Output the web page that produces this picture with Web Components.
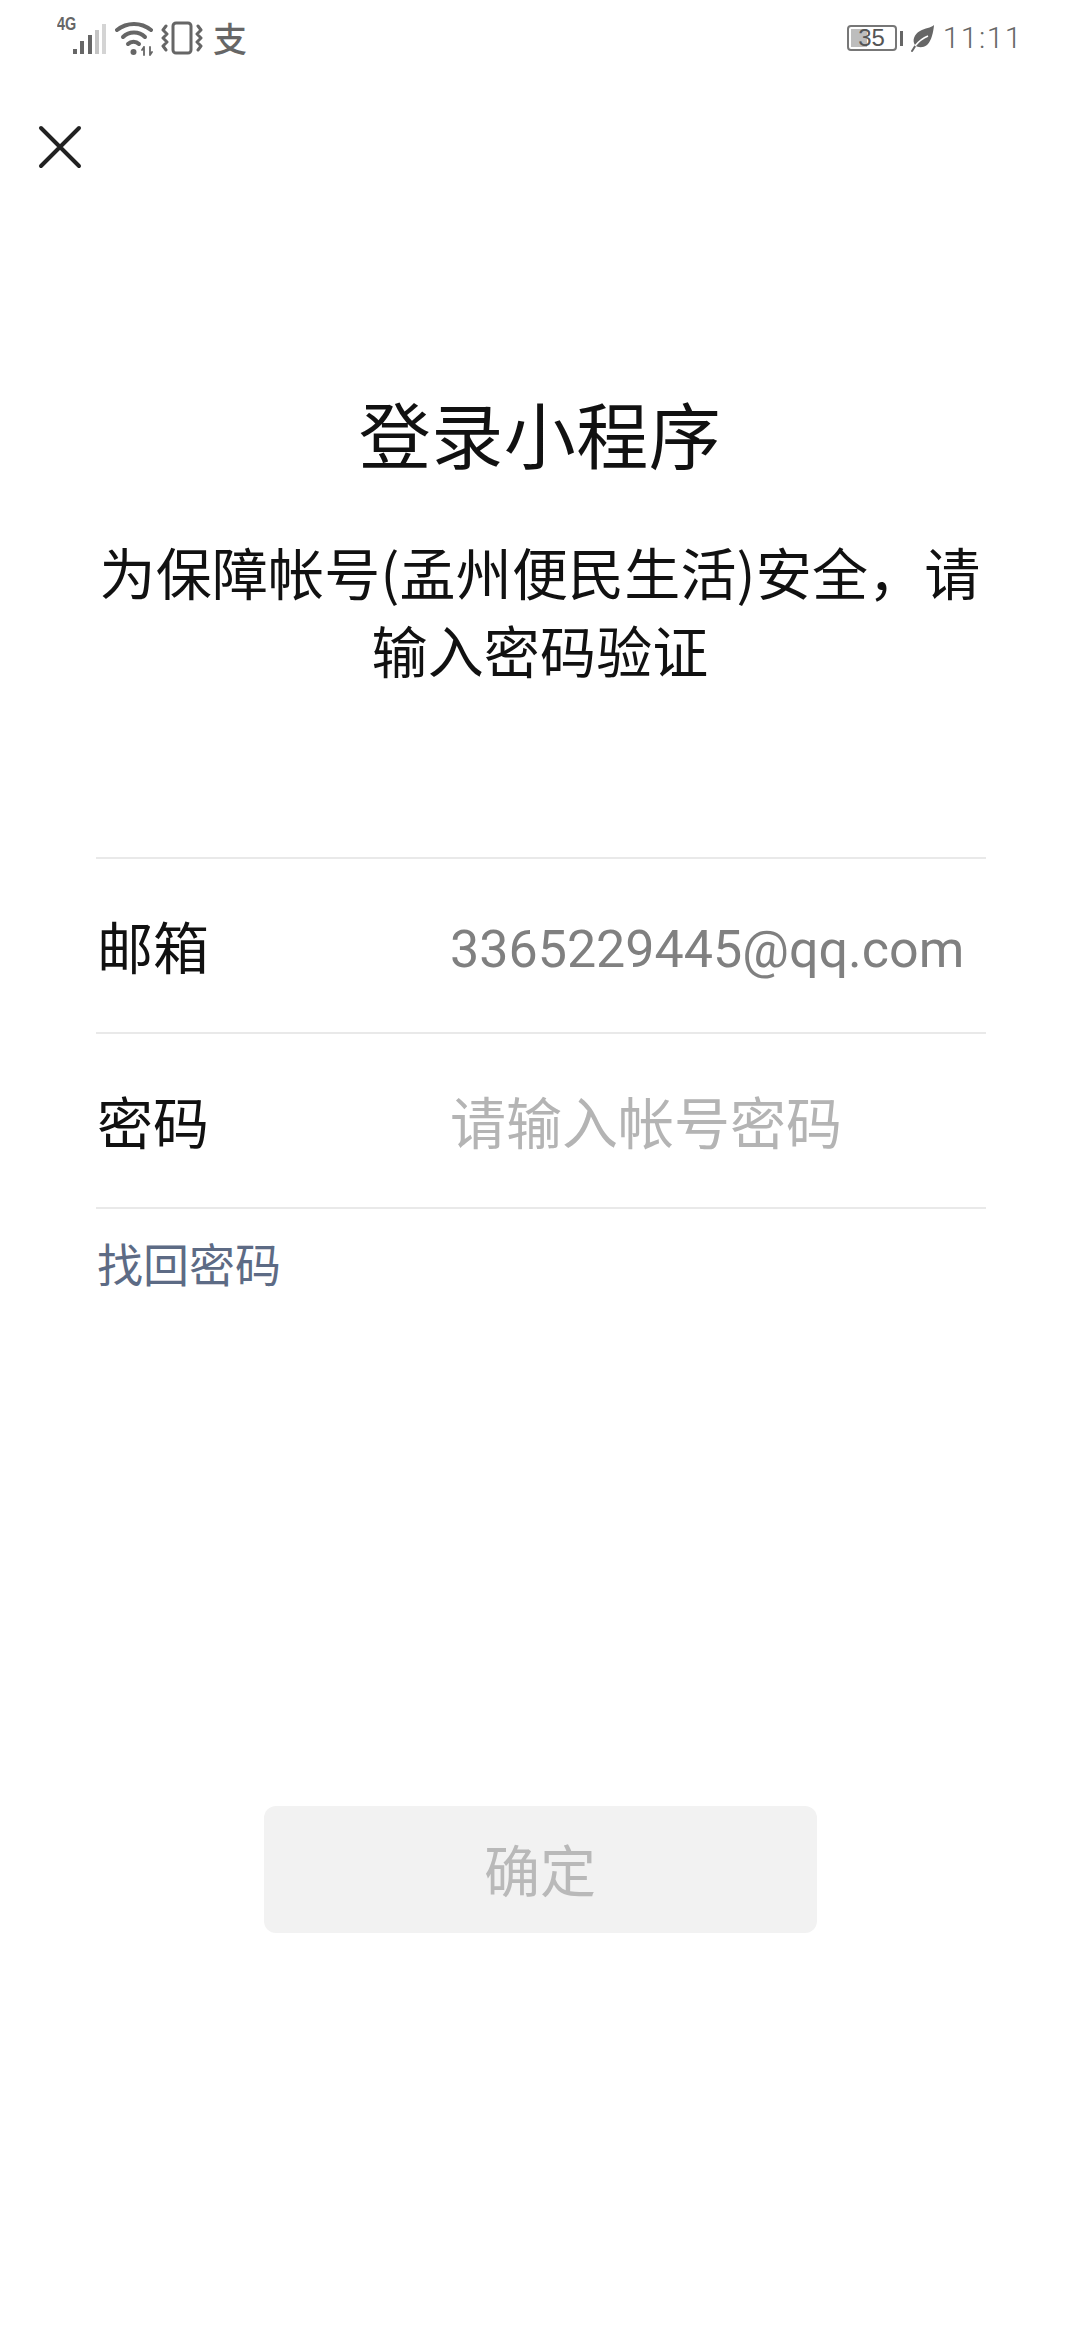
<!DOCTYPE html>
<html lang="zh">
<head>
<meta charset="utf-8">
<title>登录小程序</title>
<style>
    html, body { margin: 0; padding: 0; background: #fff; }
    body { font-family: "Noto Sans CJK SC", "Liberation Sans", sans-serif; }
</style>
</head>
<body>
<login-page></login-page>

<script>
const CJK = '"Noto Sans CJK SC", sans-serif';

class StatusBar extends HTMLElement {
    constructor() {
        super();
        this.attachShadow({ mode: 'open' });
    }

    connectedCallback() {
        this.shadowRoot.innerHTML = `
            <style>
                :host { display: flex; justify-content: space-between; align-items: center; height: 76px; padding: 0 58px 0 57px; color: #666; }
                .group { display: flex; align-items: center; }
                svg { display: block; flex: none; }
                .net { position: relative; width: 50px; height: 38px; margin-right: 8px; }
                .g4 { position: absolute; left: 0; top: -5px; font: bold 18px/20px "Liberation Sans", sans-serif; transform: scaleX(.8); transform-origin: left; }
                .pay { font: 500 34px/38px ${CJK}; margin-left: 10px; width: 34px; }
                .batt { position: relative; width: 50px; height: 26px; box-sizing: border-box; border: 2px solid #777; border-radius: 4px; font: 24px/22px "Liberation Sans", sans-serif; text-align: center; color: #555; overflow: hidden; }
                .fill { position: absolute; left: 2px; top: 2px; bottom: 2px; width: 16px; background: #bdbdbd; }
                .batt span { position: relative; }
                .nub { width: 3px; height: 15px; background: #666; margin: 0 8px 0 3px; }
                .time { font: 300 30px/38px Roboto, sans-serif; letter-spacing: 1.500px; margin-left: 8px; margin-right: -1px; color: #666; }
            </style>
            <div class="group">
                <div class="net">
                    <span class="g4">4G</span>
                    <svg width="50" height="38" viewBox="0 0 50 38">
                        <rect x="16" y="30" width="4" height="5" fill="#666"/>
                        <rect x="23" y="22" width="4" height="13" fill="#666"/>
                        <rect x="31" y="16" width="4" height="19" fill="#666"/>
                        <rect x="38" y="11" width="4" height="24" fill="#c4c4c4"/>
                        <rect x="45" y="5" width="4" height="30" fill="#d4d4d4"/>
                    </svg>
                </div>
                <svg width="38" height="38" viewBox="0 0 38 38" fill="none" stroke="#666" stroke-width="4" stroke-linecap="round">
                    <path d="M2 11C12 3 26 3 36 11"/>
                    <path d="M8 18C14 12 24 12 30 18"/>
                    <path d="M13 25C16 22 21 22 24 25"/>
                    <circle cx="18.500" cy="33" r="3" fill="#666" stroke="none"/>
                    <path d="M29 28v8M29 28l-2 3M35 28v8M35 36l2-3" stroke-width="1.800"/>
                </svg>
                <svg style="margin-left:8px" width="42" height="38" viewBox="0 0 42 38" fill="none" stroke="#666" stroke-linecap="round" stroke-linejoin="round">
                    <rect x="12" y="4" width="18" height="30" rx="3" stroke-width="3"/>
                    <path d="M5 7l-3 4 4 4-4 4 4 4-4 4 3 4M37 7l3 4-4 4 4 4-4 4 4 4-3 4" stroke-width="3"/>
                </svg>
                <span class="pay">支</span>
            </div>
            <div class="group">
                <div class="batt"><div class="fill"></div><span>35</span></div>
                <div class="nub"></div>
                <svg width="24" height="28" viewBox="0 0 24 28">
                    <path d="M23 1C23 1 22 16 16 21C12 24 7 24 4 21C1 17 3 10 9 7C14 4 20 4 23 1Z" fill="#666"/>
                    <path d="M1 27C3 24 4 22 5 21" fill="none" stroke="#666" stroke-width="2" stroke-linecap="round"/>
                    <path d="M4 22C8 17 12 14 17 12" fill="none" stroke="#fff" stroke-width="1.600"/>
                </svg>
                <span class="time">11:11</span>
            </div>
        `;
    }
}

class CloseButton extends HTMLElement {
    constructor() {
        super();
        this.attachShadow({ mode: 'open' });
    }

    connectedCallback() {
        this.shadowRoot.innerHTML = `
            <style>
                :host { display: block; width: 44px; height: 44px; margin: 49px 0 0 38px; }
                svg { display: block; }
            </style>
            <svg width="44" height="44" viewBox="0 0 44 44" fill="none" stroke="#222" stroke-width="4" stroke-linecap="round">
                <path d="M3 3L41 41M41 3L3 41"/>
            </svg>
        `;
    }
}

class LoginHeading extends HTMLElement {
    constructor() {
        super();
        this.attachShadow({ mode: 'open' });
    }

    connectedCallback() {
        this.shadowRoot.innerHTML = `
            <style>
                :host { display: block; text-align: center; color: #111; padding: 0 96px; }
                h1 { margin: 0; font: 400 72px/100px ${CJK}; letter-spacing: .5px; }
                p { margin: 50px -10px 0; font: 400 56px/78px ${CJK}; letter-spacing: .18px; }
            </style>
            <h1>${this.getAttribute('title')}</h1>
            <p><slot></slot></p>
        `;
    }
}

class FormRow extends HTMLElement {
    constructor() {
        super();
        this.attachShadow({ mode: 'open' });
    }

    connectedCallback() {
        this.shadowRoot.innerHTML = `
            <style>
                :host { display: flex; align-items: center; height: 173px; border-bottom: 2px solid #e9e9e9; }
                .label { width: 354px; padding: 0 0 2px 1px; box-sizing: border-box; font: 400 56px/78px ${CJK}; color: #111; }
                ::slotted(*) { font-size: 56px; line-height: 78px; }
            </style>
            <span class="label">${this.getAttribute('label')}</span>
            <slot></slot>
        `;
    }
}

class LoginForm extends HTMLElement {
    constructor() {
        super();
        this.attachShadow({ mode: 'open' });
    }

    connectedCallback() {
        this.shadowRoot.innerHTML = `
            <style>
                :host { display: block; margin: 169px 94px 0 96px; border-top: 2px solid #e9e9e9; }
                a { display: block; margin-top: 21px; padding-left: 1px; font: 400 46px/64px ${CJK}; color: #5d6b85; text-decoration: none; }
            </style>
            <slot></slot>
            <a href="#">找回密码</a>
        `;
    }
}

class ConfirmButton extends HTMLElement {
    constructor() {
        super();
        this.attachShadow({ mode: 'open' });
    }

    connectedCallback() {
        this.shadowRoot.innerHTML = `
            <style>
                :host { display: flex; justify-content: center; align-items: center; box-sizing: border-box; width: 553px; height: 127px; padding-bottom: 3px; margin: 512px auto 0; border-radius: 12px; background: #f2f2f2; color: #b9b9b9; font: 400 56px/78px ${CJK}; }
            </style>
            <slot></slot>
        `;
    }
}

class LoginPage extends HTMLElement {
    constructor() {
        super();
        this.attachShadow({ mode: 'open' });
    }

    connectedCallback() {
        this.shadowRoot.innerHTML = `
            <style>
                :host { display: block; width: 1080px; height: 2340px; overflow: hidden; background: #fff; }
                login-heading { margin-top: 213px; }
                .email { font-family: Roboto, sans-serif; font-weight: 400; font-size: 52px; padding-top: 9px; color: #808080; }
                .hint { font-family: ${CJK}; color: #b4b4b4; padding-bottom: 2px; }
            </style>
            <status-bar></status-bar>
            <close-button></close-button>
            <login-heading title="登录小程序">为保障帐号(孟州便民生活)安全，请输入密码验证</login-heading>
            <login-form>
                <form-row label="邮箱"><span class="email">3365229445@qq.com</span></form-row>
                <form-row label="密码"><span class="hint">请输入帐号密码</span></form-row>
            </login-form>
            <confirm-button>确定</confirm-button>
        `;
    }
}

customElements.define('status-bar', StatusBar);
customElements.define('close-button', CloseButton);
customElements.define('login-heading', LoginHeading);
customElements.define('form-row', FormRow);
customElements.define('login-form', LoginForm);
customElements.define('confirm-button', ConfirmButton);
customElements.define('login-page', LoginPage);
</script>
</body>
</html>
